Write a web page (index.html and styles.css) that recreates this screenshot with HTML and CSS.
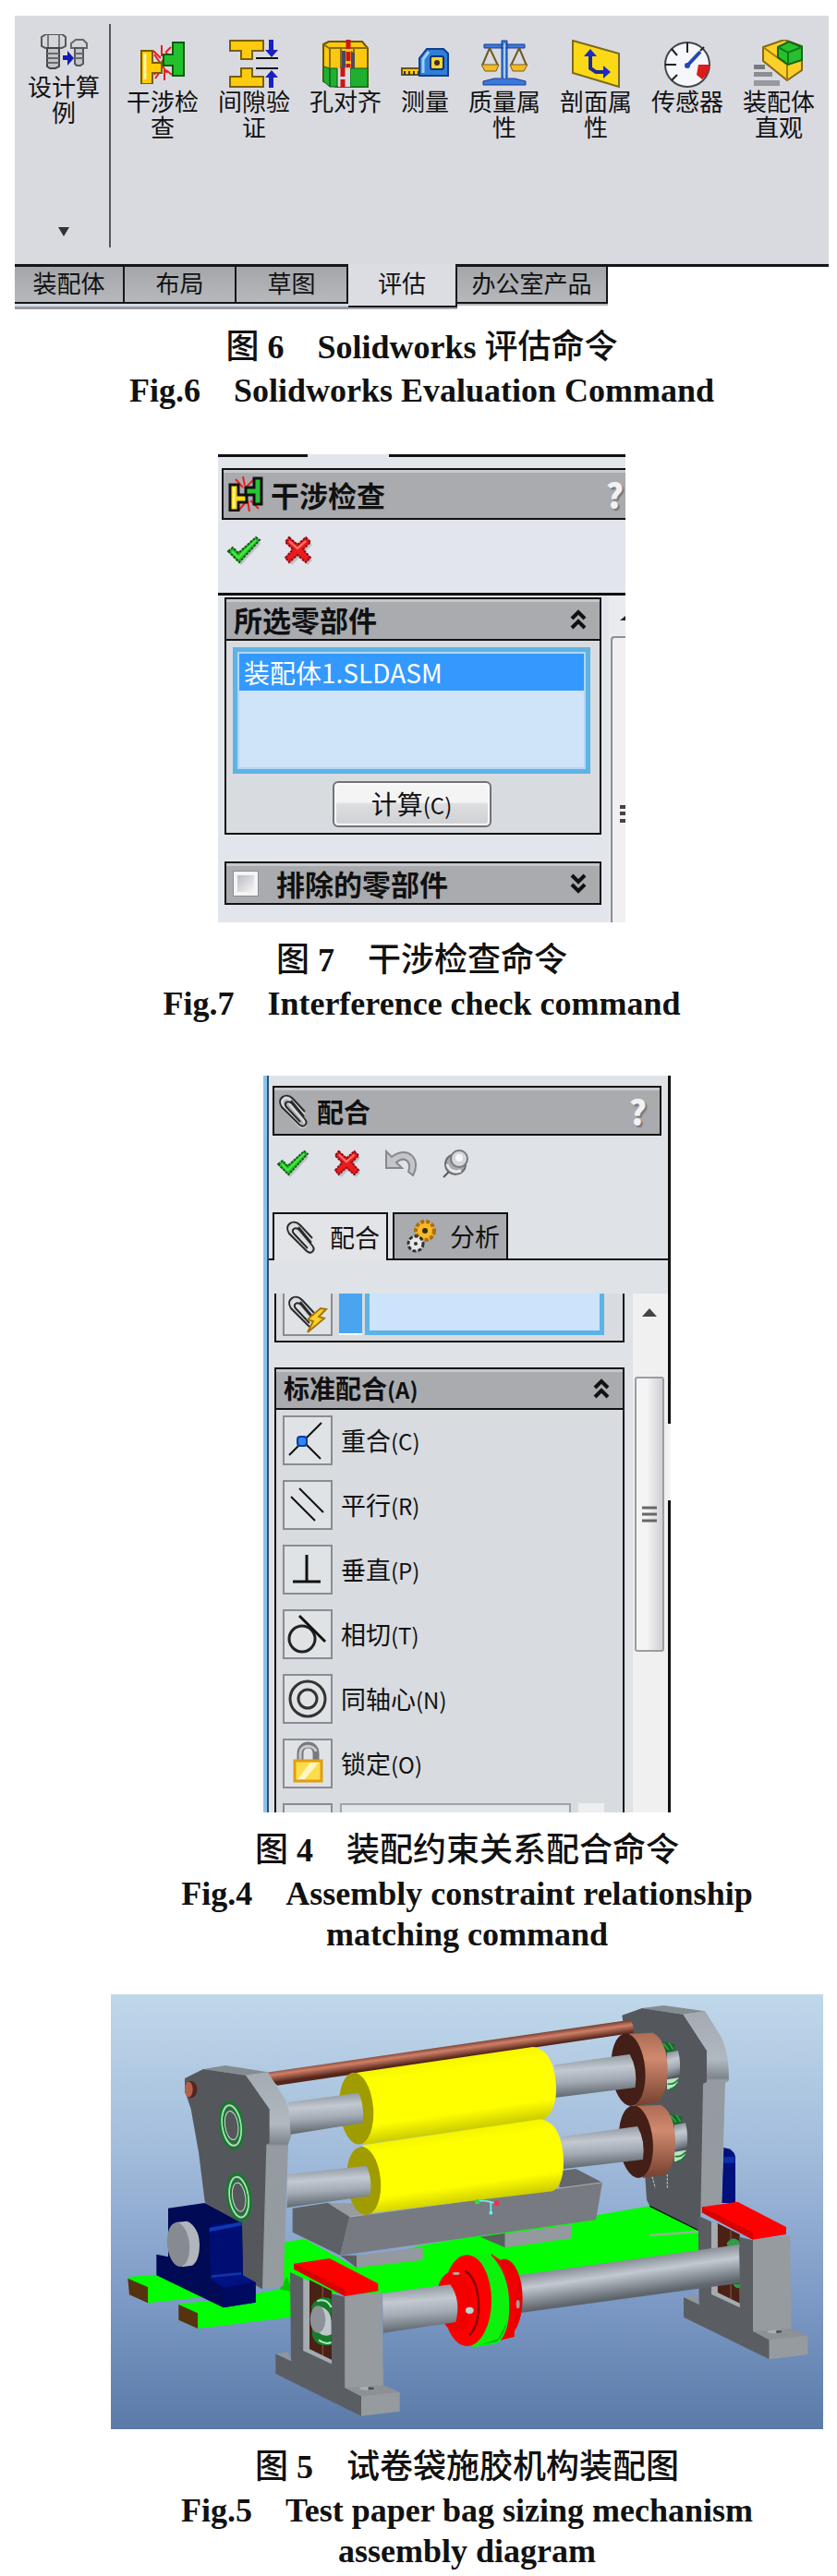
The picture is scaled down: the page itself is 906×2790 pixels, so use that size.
FILE: index.html
```html
<!DOCTYPE html>
<html lang="zh-CN">

<head>
    <meta charset="UTF-8" />
    <meta name="viewport" content="width=device-width, initial-scale=1" />
    <title>Solidworks 装配与评估</title>
    <link rel="stylesheet" href="styles.css">
</head>

<body>
    <!-- símbolos reutilizados nos painéis -->
    <svg class="sprite" aria-hidden="true">
        <symbol id="i-check" viewBox="0 0 38 32">
            <path d="M3 18l6-4 5 6L32 2l4 5-21 23z" fill="#9aa0a4" transform="translate(1 2)" opacity=".5" />
            <path d="M2 17l5-4 6 6L32 2l4 3-22 24z" fill="#22c822" stroke="#0b5a12" stroke-width="2" stroke-dasharray="3 1" />
            <path d="M6 17l7 7L32 5" fill="none" stroke="#4de64a" stroke-width="2" />
        </symbol>
        <symbol id="i-cross" viewBox="0 0 32 32">
            <path d="M7 3l9 8 9-8 4 5-8 8 8 9-5 5-8-9-9 9-5-5 9-9-8-8z" fill="#9aa0a4" transform="translate(2 2)" opacity=".5" />
            <path d="M6 2l9 8 9-8 5 5-8 8 8 9-5 5-9-8-9 8-4-5 8-9-8-8z" fill="#ec1c1c" stroke="#8e0b10" stroke-width="2" stroke-dasharray="3 1" />
            <path d="M6 6l9 8 9-8" fill="none" stroke="#ff7d76" stroke-width="2" />
        </symbol>
        <symbol id="i-up" viewBox="0 0 18 24">
            <path d="M2 11l7-7 7 7M2 21l7-7 7 7" fill="none" stroke="#111" stroke-width="4" />
        </symbol>
        <symbol id="i-down" viewBox="0 0 18 24">
            <path d="M2 3l7 7 7-7M2 13l7 7 7-7" fill="none" stroke="#111" stroke-width="4" />
        </symbol>
        <symbol id="i-clip" viewBox="0 0 34 38">
            <path d="M17 27L6 15c-6-7 2-14 8-8l14 17M10 8l18 21c4 6-1 9-5 5L7 17" fill="none" stroke="#d8dade" stroke-width="4" />
            <path d="M29 20L16 6C8-2-2 6 4 15l19 19c5 4 10-1 6-6L15 11c-5-4-9 0-6 4l15 16M28 25L14 8" fill="none" stroke="#2b2b2b" stroke-width="2" />
        </symbol>
        <symbol id="i-clash" viewBox="0 0 50 46">
            <path d="M16 14l14 20M30 12L16 36M24 4v12M15 10l8 8M34 6l-6 6M27 42V30M17 40l5-7M35 36l-6-5" stroke="#e62020" stroke-width="2" />
            <path d="M2 10h12v13h10v11H14v12H2z" fill="#fc0" stroke="#7a5c00" stroke-width="2" />
            <path d="M48 1H36v13H26v12h10v11h12z" fill="#22c02c" stroke="#11590f" stroke-width="2" />
            <path d="M6 13v28" stroke="#fff2a0" stroke-width="3" />
        </symbol>
        <symbol id="i-clash-small" viewBox="0 0 38 38">
            <path d="M16 0l2 10M8 3l8 9M28 3l-9 9M23 38l-2-12M12 36l7-8M33 35l-9-9" stroke="#f01c1c" stroke-width="2" />
            <path d="M2 9h9v11h9v8h-9v9H2z" fill="#fcdc10" stroke="#111" stroke-width="3" />
            <path d="M36 2h-8v10h-9v8h9v10h8z" fill="#28c434" stroke="#111" stroke-width="3" />
            <path d="M6 12v22" stroke="#fff6b0" stroke-width="2" />
        </symbol>
    </svg>

    <main class="page">
        <section class="group group-top">
            <figure>
                <div class="ribbon">
                    <div class="ribbon-tools">
                        <button class="tool tool-study" type="button">
                            <svg width="52" height="38" viewBox="0 0 52 38">
                                <path d="M2 3l5-3h17l4 3v10l-4 2H6l-4-2z" fill="#d4d6da" stroke="#55575c" stroke-width="2" />
                                <path d="M9 1v13M21 1v13" stroke="#77797e" stroke-width="2" />
                                <path d="M8 15h13v20l-4 2h-6l-3-2z" fill="#c2c4c8" stroke="#44464a" stroke-width="2" />
                                <path d="M8 21h13M8 26h13M8 31h13" stroke="#66686c" stroke-width="2" />
                                <path d="M34 10l5-4h8l4 4v5H34z" fill="#d4d6da" stroke="#66686c" stroke-width="2" />
                                <path d="M38 15h9v17l-3 2h-4l-2-2z" fill="#c2c4c8" stroke="#55575c" stroke-width="2" />
                                <path d="M38 21h9M38 26h9" stroke="#66686c" stroke-width="2" />
                                <path d="M25 23h5v-5l7 8-7 8v-6h-5z" fill="#1419b4" />
                            </svg>
                            <span>设计算例</span>
                            <svg class="tool-more" width="12" height="10" viewBox="0 0 12 10">
                                <path d="M0 0h12L6 10z" fill="#333" />
                            </svg>
                        </button>
                        <button class="tool" type="button">
                            <svg width="50" height="50" viewBox="0 -2 50 50"><use href="#i-clash" width="50" height="46" /></svg>
                            <span>干涉检查</span>
                        </button>
                        <button class="tool" type="button">
                            <svg width="54" height="52" viewBox="0 0 54 52">
                                <path d="M1 1h36v11H25v9H13v-9H1zM1 51h36V40H25v-9H13v9H1z" fill="#fccb10" stroke="#7a6000" stroke-width="2" />
                                <path d="M29 20h24M29 31h24" stroke="#111" stroke-width="2" />
                                <path d="M43 0h5v11h5l-7 8-7-8h4zM43 52h5V41h5l-7-8-7 8h4z" fill="#1a1fc0" />
                            </svg>
                            <span>间隙验证</span>
                        </button>
                        <button class="tool" type="button">
                            <svg width="50" height="52" viewBox="0 0 50 52">
                                <path d="M1 5l6-3h36l6 7v42H15L1 45z" fill="#fcc810" stroke="#6d5600" stroke-width="2" />
                                <path d="M1 29l7 2v20l-7-6zM8 31h8v20H8zM30 31h19v20H30z" fill="#20b030" stroke="#0e5a16" />
                                <path d="M1 5l6 4h42M8 9v22M20 9v40M34 9v20" stroke="#8a6d00" stroke-width="2" fill="none" />
                                <path d="M17 31h13v20H17z" fill="#d9dae0" />
                                <path d="M21 12h4v18h-4zM31 12l4 3v16h-4z" fill="#444b66" />
                                <path d="M28 0v30M22 30v22" stroke="#d01414" stroke-width="5" stroke-dasharray="10 3" />
                            </svg>
                            <span>孔对齐</span>
                        </button>
                        <button class="tool tool-narrow" type="button">
                            <svg width="52" height="50" viewBox="0 0 52 50">
                                <path d="M1 31h28v7H1z" fill="#fcc810" stroke="#6d5600" stroke-width="2" />
                                <path d="M4 38v-4M9 38v-4M14 38v-4M19 38v-4" stroke="#333" stroke-width="2" />
                                <path d="M20 39V20L28 10h18l5 5v24z" fill="#2f7fd8" stroke="#123f8c" stroke-width="2" />
                                <path d="M24 36V21l6-8" fill="none" stroke="#9fd0ff" stroke-width="3" />
                                <rect x="32" y="18" width="14" height="14" rx="2" fill="#fcd430" stroke="#0e3470" stroke-width="2" />
                                <circle cx="39" cy="25" r="3" fill="#41301a" />
                            </svg>
                            <span>测量</span>
                        </button>
                        <button class="tool" type="button">
                            <svg width="50" height="50" viewBox="0 0 50 50">
                                <path d="M3 5h44v4H3zM22 1h6v40h-6zM14 42h22l12 3v4H2v-4z" fill="#3b78dc" stroke="#1a3d94" />
                                <path d="M25 4v38" stroke="#a5ccff" stroke-width="2" />
                                <path d="M9 9L1 28M9 9l9 19M41 9l-9 19M41 9l8 19" stroke="#6e5a20" stroke-width="2" />
                                <path d="M0 27h19l-3 7H4zM31 27h19l-4 7H34z" fill="#f2bb28" stroke="#7a5a10" />
                            </svg>
                            <span>质量属性</span>
                        </button>
                        <button class="tool" type="button">
                            <svg width="52" height="52" viewBox="0 0 52 52">
                                <path d="M1 1l50 14v36L1 36z" fill="#fbd916" stroke="#7d6a20" stroke-width="2" />
                                <path d="M20 17v14l6 4h8" fill="none" stroke="#1d2a9c" stroke-width="4" />
                                <path d="M20 10l7 8H13zM42 35l-8 7V28z" fill="#1d2acb" />
                            </svg>
                            <span>剖面属性</span>
                        </button>
                        <button class="tool" type="button">
                            <svg width="52" height="52" viewBox="0 0 52 52">
                                <circle cx="26" cy="27" r="24" fill="#f6f7fa" stroke="#44464c" stroke-width="2" />
                                <path d="M38 27h12c0 7-3 12-8 16l-6-5z" fill="#da1c1c" />
                                <path d="M26 3v11M2 27h12M9 10l6 7M9 44l6-6M40 12l4-4" stroke="#222" stroke-width="2" />
                                <path d="M26 28L40 13" stroke="#2546b8" stroke-width="4" />
                                <circle cx="26" cy="28" r="3" fill="#2546b8" />
                            </svg>
                            <span>传感器</span>
                        </button>
                        <button class="tool" type="button">
                            <svg width="54" height="52" viewBox="0 0 54 52">
                                <path d="M10 8L33 0l19 7v26l-16 11-26-21z" fill="#fbd028" stroke="#86681a" stroke-width="2" />
                                <path d="M10 8l26 19v17M36 27l16-7" stroke="#a57c10" stroke-width="2" fill="none" />
                                <path d="M26 8l12-6 14 6v14l-15 5-11-8z" fill="#27bf2d" stroke="#0f6716" stroke-width="2" />
                                <path d="M26 8l11 6 15-6M37 14v12" stroke="#0f7d1a" stroke-width="2" fill="none" />
                                <path d="M0 27h12v5H0z" fill="#77797e" />
                                <path d="M0 35h20v5H0z" fill="#8b8d92" />
                                <path d="M0 44h28v6H0z" fill="#97999e" />
                            </svg>
                            <span>装配体直观</span>
                        </button>
                    </div>
                    <div class="ribbon-tabs" role="tablist">
                        <button class="rtab rtab-first" role="tab" type="button">装配体</button>
                        <button class="rtab" role="tab" type="button">布局</button>
                        <button class="rtab" role="tab" type="button">草图</button>
                        <button class="rtab rtab-active" role="tab" aria-selected="true" type="button">评估</button>
                        <button class="rtab rtab-wide" role="tab" type="button">办公室产品</button>
                        <span class="ribbon-rest"></span>
                    </div>
                </div>
                <figcaption>
                    <p class="zh">图 <b>6</b>　<b>Solidworks</b> 评估命令</p>
                    <p>Fig.6　Solidworks Evaluation Command</p>
                </figcaption>
            </figure>

            <figure>
                <div class="panel check-panel">
                    <div class="panel-edge"></div>
                    <div class="title-bar title-cut">
                        <svg width="38" height="38"><use href="#i-clash-small" /></svg>
                        <span>干涉检查</span>
                        <b class="help">?</b>
                    </div>
                    <div class="actions">
                        <button type="button" aria-label="确定"><svg width="38" height="32"><use href="#i-check" /></svg></button>
                        <button type="button" aria-label="取消"><svg width="32" height="32"><use href="#i-cross" /></svg></button>
                    </div>
                    <div class="check-body">
                        <div class="check-main">
                            <section class="box">
                                <h2 class="box-head">
                                    <label for="parts">所选零部件</label>
                                    <svg width="18" height="24"><use href="#i-up" /></svg>
                                </h2>
                                <div class="box-content">
                                    <select class="parts" id="parts" size="4">
                                        <option selected>装配体1.SLDASM</option>
                                    </select>
                                    <button class="calc" type="button">计算<small>(C)</small></button>
                                </div>
                            </section>
                            <section class="box">
                                <h2 class="box-head">
                                    <input class="tick" type="checkbox" id="exclude">
                                    <label class="grow" for="exclude">排除的零部件</label>
                                    <svg width="18" height="24"><use href="#i-down" /></svg>
                                </h2>
                            </section>
                        </div>
                        <div class="check-scroll">
                            <svg width="6" height="5"><path d="M0 5l6-5v5z" fill="#222" /></svg>
                            <div class="check-thumb">
                                <svg width="6" height="20"><path d="M0 2h6M0 9h6M0 17h6" stroke="#444" stroke-width="4" /></svg>
                            </div>
                        </div>
                    </div>
                </div>
                <figcaption>
                    <p class="zh">图 <b>7</b>　干涉检查命令</p>
                    <p>Fig.7　Interference check command</p>
                </figcaption>
            </figure>
        </section>

        <section class="group group-bottom">
            <figure>
                <div class="panel mate-panel">
                    <div class="mate-frame">
                        <div class="title-bar mate-title">
                            <svg width="34" height="38"><use href="#i-clip" /></svg>
                            <span>配合</span>
                            <b class="help">?</b>
                        </div>
                        <div class="actions mate-actions">
                            <button type="button" aria-label="确定"><svg width="36" height="30"><use href="#i-check" /></svg></button>
                            <button type="button" aria-label="取消"><svg width="30" height="30"><use href="#i-cross" /></svg></button>
                            <button type="button" aria-label="撤消">
                                <svg width="36" height="30" viewBox="0 0 36 30">
                                    <path d="M1 2v18h17l-6-6c8-7 17-2 13 10l5 4C40 10 24-5 7 8z" fill="#c3c5ca" stroke="#85888e" stroke-width="2" />
                                </svg>
                            </button>
                            <button type="button" aria-label="保持可见">
                                <svg width="28" height="32" viewBox="0 0 28 32">
                                    <path d="M1 30l9-9" stroke="#55575c" stroke-width="2" />
                                    <circle cx="14" cy="16" r="11" fill="#a9abb0" stroke="#6c6e73" stroke-width="2" />
                                    <path d="M5 16c2 8 10 9 15 7" stroke="#e8e9ec" stroke-width="3" fill="none" />
                                    <circle cx="18" cy="10" r="9" fill="#d5d7da" stroke="#787a80" stroke-width="2" />
                                    <circle cx="18" cy="9" r="4" fill="#f7f7f9" />
                                </svg>
                            </button>
                        </div>
                        <div class="mate-tabs" role="tablist">
                            <button class="mtab mtab-active" role="tab" aria-selected="true" type="button">
                                <svg width="34" height="38"><use href="#i-clip" /></svg>配合
                            </button>
                            <button class="mtab" role="tab" type="button">
                                <svg width="34" height="38" viewBox="0 0 34 38">
                                    <circle cx="21" cy="13" r="10" fill="#f7b928" stroke="#b06d06" stroke-width="4" stroke-dasharray="4 2" />
                                    <circle cx="21" cy="13" r="3" fill="#3a2a10" />
                                    <circle cx="11" cy="27" r="8" fill="#e6e8ea" stroke="#2f3134" stroke-width="3" stroke-dasharray="4 2" />
                                    <circle cx="11" cy="27" r="2" fill="#333" />
                                </svg>分析
                            </button>
                        </div>
                        <div class="mate-body">
                            <div class="mate-main">
                                <section class="box picks">
                                    <button class="square square-cut" type="button" aria-label="多配合模式">
                                        <svg width="44" height="42" viewBox="0 0 44 42">
                                            <use href="#i-clip" width="34" height="38" />
                                            <path d="M36 15L22 27l6 2-6 12 18-15-6-2 8-8z" fill="#fcd22a" stroke="#a87608" stroke-width="2" />
                                        </svg>
                                    </button>
                                    <span class="pick-mark"></span>
                                    <span class="pick-list"></span>
                                </section>
                                <section class="box mates">
                                    <h2 class="box-head">
                                        <span>标准配合<small>(A)</small></span>
                                        <svg width="18" height="24"><use href="#i-up" /></svg>
                                    </h2>
                                    <div class="mate-list">
                                        <button class="mate" type="button">
                                            <span class="square"><svg width="50" height="50" viewBox="0 0 50 50">
                                                <path d="M5 41L40 6M20 26l19 19" stroke="#111" stroke-width="2" />
                                                <rect x="14" y="21" width="10" height="10" rx="3" fill="#2f86f4" stroke="#0b3c9c" stroke-width="2" />
                                            </svg></span>
                                            <span>重合<small>(C)</small></span>
                                        </button>
                                        <button class="mate" type="button">
                                            <span class="square"><svg width="50" height="50" viewBox="0 0 50 50">
                                                <path d="M16 7l26 26M7 16l26 26" stroke="#111" stroke-width="2" />
                                            </svg></span>
                                            <span>平行<small>(R)</small></span>
                                        </button>
                                        <button class="mate" type="button">
                                            <span class="square"><svg width="50" height="50" viewBox="0 0 50 50">
                                                <path d="M24 9v29M9 38h30" stroke="#111" stroke-width="3" />
                                            </svg></span>
                                            <span>垂直<small>(P)</small></span>
                                        </button>
                                        <button class="mate" type="button">
                                            <span class="square"><svg width="50" height="50" viewBox="0 0 50 50">
                                                <circle cx="19" cy="30" r="14" fill="none" stroke="#222" stroke-width="3" />
                                                <path d="M16 5l28 28" stroke="#111" stroke-width="3" />
                                            </svg></span>
                                            <span>相切<small>(T)</small></span>
                                        </button>
                                        <button class="mate" type="button">
                                            <span class="square"><svg width="50" height="50" viewBox="0 0 50 50">
                                                <circle cx="25" cy="25" r="19" fill="none" stroke="#333" stroke-width="3" />
                                                <circle cx="25" cy="25" r="10" fill="none" stroke="#333" stroke-width="3" />
                                            </svg></span>
                                            <span>同轴心<small>(N)</small></span>
                                        </button>
                                        <button class="mate" type="button">
                                            <span class="square"><svg width="50" height="50" viewBox="0 0 50 50">
                                                <path d="M17 23v-9c0-12 17-12 17 0v9" fill="none" stroke="#77797e" stroke-width="7" />
                                                <path d="M17 21v-7c0-10 15-10 17-2" fill="none" stroke="#c8cacd" stroke-width="3" />
                                                <rect x="11" y="22" width="29" height="22" fill="#fbdc4c" stroke="#e09e10" stroke-width="3" />
                                                <path d="M14 42l14-18h9L22 42z" fill="#fff6c4" />
                                            </svg></span>
                                            <span>锁定<small>(O)</small></span>
                                        </button>
                                        <div class="mate-next">
                                            <span class="square"></span>
                                            <input class="distance" type="text" aria-label="距离">
                                            <span class="spin"></span>
                                        </div>
                                    </div>
                                </section>
                            </div>
                            <div class="mate-scroll">
                                <svg width="16" height="9"><path d="M0 9l8-9 8 9z" fill="#444" /></svg>
                                <div class="mate-thumb">
                                    <svg width="16" height="18"><path d="M0 2h16M0 9h16M0 16h16" stroke="#666" stroke-width="3" /></svg>
                                </div>
                            </div>
                        </div>
                    </div>
                    <div class="mate-side"><i></i><i></i></div>
                </div>
                <figcaption>
                    <p class="zh">图 <b>4</b>　装配约束关系配合命令</p>
                    <p>Fig.4　Assembly constraint relationship<br>matching command</p>
                </figcaption>
            </figure>

            <figure>
                <svg class="model" viewBox="30 27 2313 1413" role="img" aria-label="试卷袋施胶机构装配图">
                    <defs>
                        <linearGradient id="sky" x1="0" y1="0" x2="0" y2="1">
                            <stop offset="0" stop-color="#c0d8ea" />
                            <stop offset=".35" stop-color="#a3bddc" />
                            <stop offset=".7" stop-color="#7d9ac6" />
                            <stop offset="1" stop-color="#5b7aa7" />
                        </linearGradient>
                        <linearGradient id="steel" x1="0" y1="0" x2=".13" y2="1">
                            <stop offset="0" stop-color="#7f868d" />
                            <stop offset=".38" stop-color="#c3c9d1" />
                            <stop offset=".65" stop-color="#a3abb4" />
                            <stop offset="1" stop-color="#5e656d" />
                        </linearGradient>
                        <linearGradient id="axle" gradientUnits="userSpaceOnUse" x1="1600" y1="900" x2="1617" y2="1020">
                            <stop offset="0" stop-color="#7f868d" />
                            <stop offset=".4" stop-color="#c3c9d1" />
                            <stop offset="1" stop-color="#5e656d" />
                        </linearGradient>
                        <linearGradient id="rod" gradientUnits="userSpaceOnUse" x1="1100" y1="195" x2="1106" y2="238">
                            <stop offset="0" stop-color="#6e3628" />
                            <stop offset=".4" stop-color="#cf8068" />
                            <stop offset="1" stop-color="#54251a" />
                        </linearGradient>
                        <linearGradient id="roll" gradientUnits="userSpaceOnUse" x1="1100" y1="240" x2="1134" y2="474">
                            <stop offset="0" stop-color="#f4f400" />
                            <stop offset=".15" stop-color="#ff0" />
                            <stop offset=".75" stop-color="#ff0" />
                            <stop offset="1" stop-color="#cccc00" />
                        </linearGradient>
                        <linearGradient id="disc" x1="0" y1="0" x2="0" y2="1">
                            <stop offset="0" stop-color="#ad6c55" />
                            <stop offset=".35" stop-color="#d08a6e" />
                            <stop offset="1" stop-color="#75402f" />
                        </linearGradient>
                        <linearGradient id="cheek" x1="0" y1="0" x2="0" y2="1">
                            <stop offset="0" stop-color="#a4abb1" />
                            <stop offset=".24" stop-color="#b0b8c0" />
                            <stop offset=".33" stop-color="#7d848a" />
                            <stop offset=".34" stop-color="#949ba1" />
                            <stop offset="1" stop-color="#959b9f" />
                        </linearGradient>
                        <g id="cheek-plate">
                            <path d="M468 290l72-10 60 95c10 30 18 70 18 105l-12 33-16 462-68 10z" fill="url(#cheek)" />
                            <path d="M330 270l72-12 138 22-72 10z" fill="#858c91" />
                            <path d="M270 300l60-30 138 20 77 110v110l-10 5-13 470-62-35-125-250-20-160-25-140-20-60z" fill="#54585d" />
                        </g>
                        <g id="ring" fill="none">
                            <ellipse rx="36" ry="76" stroke="#167a2a" stroke-width="8" />
                            <ellipse rx="30" ry="66" stroke="#9fe5b2" stroke-width="6" />
                            <ellipse rx="25" ry="55" stroke="#187b2c" stroke-width="6" />
                            <ellipse rx="21" ry="47" stroke="#c9d8ce" stroke-width="3" />
                        </g>
                        <g id="stand">
                            <path d="M675 955l72 36v224l-72-35z" fill="#4b2015" />
                            <path d="M718 975v230" stroke="#8e5a48" stroke-width="3" />
                            <path d="M612 930l43 20v235l92 43v-228l43 10v295l53 28v64L565 1260v-65l50 24z" fill="#5a5e63" />
                            <path d="M655 950l20 9v221l72 35v13l-92-43z" fill="#a5abaf" />
                            <path d="M565 1195l40-6 12 30z" fill="#90969a" />
                            <path d="M790 1008l120-13 5 305 53 20v62l-125 15v-64l-53-28z" fill="#959b9f" />
                            <path d="M790 1305l125-8 53 23-125 13z" fill="#8b9195" />
                            <ellipse cx="862" cy="1307" rx="26" ry="6" fill="#a8aeb2" />
                            <path d="M866 1303q20 0 20 4-4 6-20 5z" fill="#4b4f53" />
                            <path d="M625 902l115-17 158 82v24l-108 17-165-88z" fill="#f00" />
                            <path d="M625 902l165 84v22l-165-88z" fill="#d60000" />
                        </g>
                        <g id="wheel">
                            <path d="M545 156l75-4c30 15 48 60 48 120 0 50-12 85-30 105l-75 13z" fill="url(#disc)" />
                            <ellipse cx="540" cy="272" rx="55" ry="118" fill="#431f18" transform="rotate(-5 540 272)" />
                        </g>
                    </defs>
                    <rect x="30" y="27" width="2313" height="1413" fill="url(#sky)" />

                    <!-- base verde -->
                    <path d="M595 832l65-10 165 93 200-70 755-130 160 80v66l-590 79-450 60H580z" fill="#0f0" />
                    <path d="M85 945l95-6 150 72-180 19z" fill="#0f0" />
                    <path d="M85 950l65 28v52l-60-27z" fill="#55330f" />
                    <path d="M250 1033l150-15 180-33 60 5v83l-328 40z" fill="#0f0" />
                    <path d="M578 985l24-40 20 50z" fill="#07c507" />
                    <path d="M250 1035l62 28v50l-62-28z" fill="#55330f" />

                    <!-- lateral direita -->
                    <path d="M2020 525q36 5 38 30v150h-44z" fill="#00107c" />
                    <path d="M2020 555h36v20h-36z" fill="#0b2fae" />
                    <g transform="translate(1170 0)">
                        <path d="M718 92l72-10 50 80c20 40 27 80 27 145l-12 8-12 390-70 37z" fill="url(#cheek)" />
                        <path d="M585 72l70-9 135 19-72 10z" fill="#858c91" />
                        <path d="M520 95l65-23 133 20 77 118v102l-12 6-8 425-5 52-160-80-10-20-5-75z" fill="#54585d" />
                        <path d="M610 715l160 80" stroke="#111" stroke-width="4" />
                        <path d="M610 806l160-12v8l-160 12z" fill="#8fb78f" />
                        <path d="M618 620l10 36M667 612v44" stroke="#c9ced2" stroke-width="3" stroke-dasharray="8 4" />
                    </g>
                    <g id="journal">
                        <path d="M1818 180l44 10-4 22-40 8z" fill="#146a26" />
                        <path d="M1824 186l18 22M1842 184l14 22" stroke="#2fa546" stroke-width="5" />
                        <path d="M1836 216l36-6q10 40 4 78l-40 12z" fill="url(#steel)" />
                        <path d="M1836 304l38-6q-4 34-38 38z" fill="#b8e6c4" />
                        <path d="M1838 318q20 4 34-14M1846 334q12 0 22-14" stroke="#187b2c" stroke-width="5" fill="none" />
                    </g>
                    <use href="#journal" x="24" y="235" />

                    <!-- haste de cobre -->
                    <path d="M530 282l1185-172q14 12 12 42L570 323z" fill="url(#rod)" />

                    <!-- cuba -->
                    <path d="M620 722l115-18 100 40-30 6-30 125-155-75z" fill="#5d6166" />
                    <path d="M735 706l90 0 20 40-40 4z" fill="#969ca1" />
                    <path d="M1490 600l50-6 86 44-140 20z" fill="#64686d" />
                    <path d="M775 875h53v40z" fill="#5a5e63" />
                    <path d="M828 875l215-27v42l-215 25z" fill="#93999e" />
                    <path d="M1230 815l80-12v47z" fill="#5a5e63" />
                    <path d="M1310 805l215-30v45l-215 30z" fill="#93999e" />
                    <path d="M805 750l821-112-21 122-830 115z" fill="#777b81" />
                    <path d="M805 750l821-112" stroke="#a9afb4" stroke-width="3" />

                    <!-- eixos e rolos -->
                    <use href="#wheel" transform="translate(1170 0)" />
                    <use href="#wheel" transform="translate(1195 234)" />
                    <path d="M1470 256l245-34q26 46 18 108l-263 33z" fill="url(#steel)" />
                    <path d="M1495 490l245-34q26 46 18 108l-263 31z" fill="url(#steel)" />

                    <use href="#cheek-plate" />
                    <path d="M825 282l575-84c50 6 75 60 76 140 0 50-20 90-46 96L850 515z" fill="url(#roll)" />
                    <ellipse cx="827" cy="398" rx="55" ry="117" fill="#a09c00" transform="rotate(-5 827 398)" />
                    <g transform="translate(24 235)">
                        <path d="M825 282l575-84c50 6 75 60 76 140 0 50-14 85-36 94L830 505z" fill="url(#roll)" />
                        <ellipse cx="827" cy="398" rx="55" ry="111" fill="#a09c00" transform="rotate(-5 827 398)" />
                    </g>
                    <path d="M606 378l228-31q20 40 14 98l-234 37z" fill="url(#steel)" />
                    <path d="M604 612l256-28q20 40 12 98l-270 38z" fill="url(#steel)" />

                    <ellipse cx="290" cy="336" rx="20" ry="28" fill="#54251a" />
                    <ellipse cx="283" cy="336" rx="13" ry="25" fill="#b0614c" />
                    <use href="#ring" transform="translate(422 453) rotate(-8)" />
                    <use href="#ring" transform="translate(446 686) rotate(-8)" />

                    <!-- mancal azul -->
                    <path d="M216 722l118-17 122 66 3 172 41 20v65l-105 17-217-105v-68l38 8z" fill="#000a55" />
                    <path d="M350 790q5-15 25-18l80-4 4 175-104 12z" fill="#000e74" />
                    <path d="M350 792l105-20" stroke="#0d38b8" stroke-width="12" />
                    <path d="M352 950l107-10 41 22-105 18z" fill="#001183" />
                    <path d="M395 980l105-16v64l-105 17z" fill="#000a60" />
                    <path d="M356 944l98-10" stroke="#0f35a8" stroke-width="8" />
                    <path d="M240 768l38-4q38 20 40 74 0 56-24 70l-34 5z" fill="#b0b6bc" />
                    <ellipse cx="249" cy="840" rx="36" ry="72" fill="#858b90" transform="rotate(-6 249 840)" />

                    <!-- suportes, eixo e acoplamento -->
                    <use href="#stand" transform="translate(1325 -184)" />
                    <use href="#stand" />
                    <g>
                        <path d="M682 1040q20-40 64-24v150q-50 10-62-30z" fill="#187b2c" />
                        <path d="M700 1024q30-12 46 20M705 1150q20 16 41 8" stroke="#a6ecb8" stroke-width="6" fill="none" />
                        <path d="M705 1042q42 4 41 60v30q-20 10-40-5z" fill="#c0c6cb" />
                        <ellipse cx="702" cy="1083" rx="25" ry="44" fill="#8c9297" />
                    </g>
                    <path d="M2030 835q20-26 40-6l4 20-40 4zM2050 968h24v12q-14 6-24-12z" fill="#2f9c48" />
                    <path d="M1345 941l725-101 3 125-718 98z" fill="url(#axle)" />

                    <ellipse cx="1308" cy="1015" rx="59" ry="128" fill="#e80000" />
                    <path d="M1265 870l30 20 55 50-10 200-50 12z" fill="#f00000" />
                    <path d="M1190 876l70-6q64 60 64 170 0 90-40 122l-80 12z" fill="#0df20d" />
                    <path d="M1230 1166l54-10q24-20 34-70l-30 60z" fill="#00bf12" />
                    <ellipse cx="1187" cy="1022" rx="79" ry="148" fill="#f00" />
                    <path d="M1180 925q46 30 44 130-2 50-30 80" stroke="#8b0000" stroke-width="8" fill="none" />
                    <ellipse cx="1148" cy="1025" rx="60" ry="98" fill="#f20000" transform="rotate(-6 1148 1025)" />
                    <path d="M912 1000l220-30q36 50 18 122l-235 35z" fill="url(#steel)" />
                    <ellipse cx="1195" cy="1054" rx="13" ry="11" fill="#b9d4d2" />
                    <ellipse cx="1151" cy="934" rx="12" ry="5" fill="#b9a9a4" />
                    <ellipse cx="1352" cy="1034" rx="6" ry="14" fill="#a99" />

                    <!-- triedro de coordenadas -->
                    <path d="M1222 698h24l18 4v34M1264 702l18 4" stroke="#6df0f0" stroke-width="5" fill="none" />
                    <circle cx="1220" cy="701" r="8" fill="#2ddc45" />
                    <circle cx="1283" cy="706" r="9" fill="#f2304a" />
                    <circle cx="1264" cy="737" r="6" fill="#5ff2f2" />
                </svg>
                <figcaption>
                    <p class="zh">图 <b>5</b>　试卷袋施胶机构装配图</p>
                    <p>Fig.5　Test paper bag sizing mechanism<br>assembly diagram</p>
                </figcaption>
            </figure>
        </section>
    </main>
</body>

</html>
```
FILE: styles.css
```css
* {
    box-sizing: border-box;
}

body {
    margin: 0;
    background: #fff;
    color: #111;
    font-family: "Noto Sans CJK SC", "Noto Sans", sans-serif;
}

button,
input,
select {
    font: inherit;
    color: inherit;
}

button {
    padding: 0;
    border: 0;
    background: none;
}

svg {
    display: block;
    flex-shrink: 0;
}

figure,
h2,
p {
    margin: 0;
}

.sprite {
    position: absolute;
    width: 0;
    height: 0;
}

.page {
    padding: 17px 9px 7px 16px;
}

.group {
    display: flex;
    flex-direction: column;
    gap: 47px;
}

.group-bottom {
    gap: 43px;
    margin-top: 56px;
    padding: 0 6px 0 104px;
}

/* legendas */
figcaption {
    margin-top: 16px;
    font-family: "Liberation Serif", "Noto Sans CJK SC", serif;
    font-size: 36px;
    font-weight: 700;
    line-height: 44px;
    text-align: center;
}

figcaption .zh {
    font-weight: 500;
    line-height: 50px;
}

/* ─── Faixa de comandos ─────────────────────────── */
.ribbon {
    font-size: 26px;
    line-height: 28px;
}

.ribbon-tools {
    display: flex;
    gap: 21px;
    height: 269px;
    padding-top: 9px;
    background: #d9dae0;
}

.tool {
    display: flex;
    flex-direction: column;
    flex-shrink: 0;
    align-items: center;
    width: 78px;
    padding-top: 17px;
}

.tool span {
    width: 100%;
}

.tool-narrow {
    width: 52px;
}

.tool svg + span {
    margin-top: auto;
    height: 191px;
}

.tool-study {
    width: 104px;
    height: 242px;
    margin-right: -4px;
    padding: 11px 10px 12px 14px;
    border-right: 2px solid #55575c;
}

.tool.tool-study svg + span {
    margin-top: 4px;
    height: auto;
}

.tool .tool-more {
    margin-top: auto;
}

.ribbon-tabs {
    display: flex;
    align-items: flex-start;
    height: 49px;
}

.rtab {
    width: 121px;
    height: 43px;
    padding-bottom: 4px;
    border: 2px solid #15161a;
    border-left-width: 0;
    border-top-width: 3px;
    background: linear-gradient(#a4a6aa, #b6b8bc);
    box-shadow: 0 3px #d3dbe6, 0 6px #9699a2;
}

.rtab-first {
    width: 119px;
}

.rtab-active {
    width: 118px;
    height: 47px;
    padding-bottom: 5px;
    border-top: 0;
    border-bottom-width: 2px;
    background: #dcdde3;
    box-shadow: 0 2px #a9abb0;
}

.rtab-wide {
    width: 163px;
    box-shadow: 0 2px #b5b7bc;
}

.ribbon-rest {
    flex: 1;
    border-top: 3px solid #15161a;
}

/* ─── Painéis ───────────────────────────────────── */
.panel {
    max-width: 441px;
    margin: 0 auto;
    overflow: hidden;
}

.title-bar {
    display: flex;
    align-items: center;
    gap: 8px;
    height: 56px;
    border: 2px solid #111;
    background: #a9abaf;
    box-shadow: inset 0 3px #c6c8cc;
    font-size: 31px;
    font-weight: 700;
}

.help {
    margin-left: auto;
    color: #f2f2f2;
    font-size: 36px;
    line-height: 40px;
    text-shadow: 2px 2px 1px #77797e;
}

.actions {
    display: flex;
    align-items: flex-start;
}

.box {
    border: 2px solid #111;
    background: #d8dbdf;
}

.box-head {
    display: flex;
    align-items: center;
    justify-content: space-between;
    height: 43px;
    padding: 0 14px 0 8px;
    background: #a9abaf;
    box-shadow: inset 0 3px #c6c8cc;
    font-size: 31px;
    font-weight: 700;
    line-height: 40px;
}

small {
    font-size: 24px;
}

/* painel de interferência */
.check-panel {
    background: #e2e5eb;
}

.panel-edge {
    height: 3px;
    background: linear-gradient(90deg, #111 22%, #e2e5eb 22%, #e2e5eb 42%, #111 42%);
}

.title-cut {
    margin: 12px 0 0 4px;
    padding: 0 2px 0 5px;
    border-right: 0;
}

.check-panel .actions {
    gap: 24px;
    height: 79px;
    padding: 17px 0 0 9px;
}

.check-body {
    display: flex;
    height: 357px;
    border-top: 3px solid #111;
}

.check-main {
    flex: 1;
    display: flex;
    flex-direction: column;
    gap: 29px;
    padding: 2px 8px 0 7px;
}

.box-content {
    display: flex;
    flex-direction: column;
    align-items: center;
    gap: 8px;
    padding: 7px 10px 6px 7px;
    border-top: 2px solid #111;
}

.parts {
    width: 100%;
    height: 137px;
    padding: 0;
    overflow: hidden;
    border: 5px solid #5db3e6;
    border-radius: 0;
    outline: 0;
    background: #cfe4f8;
    box-shadow: inset 0 0 0 2px #b4d5f3;
    font-size: 28px;
}

.parts option {
    min-height: 31px;
    margin: 2px;
    padding: 0 5px;
    line-height: 31px;
}

.parts option:checked {
    background: #39f linear-gradient(#39f, #39f);
    color: #fff;
}

.calc {
    width: 172px;
    height: 50px;
    border: 2px solid #707276;
    border-radius: 6px;
    background: linear-gradient(#f4f4f5 45%, #dcdddf 50%, #d0d1d4);
    box-shadow: inset 0 0 0 2px #fafafa;
    font-size: 28px;
    line-height: 42px;
}

.tick {
    appearance: none;
    width: 26px;
    height: 26px;
    margin: 0 20px 0 0;
    border: 4px solid #f4f4f4;
    outline: 1px solid #8b8d92;
    background: linear-gradient(135deg, #b9bbc2, #f6f6f8);
}

.grow {
    flex: 1;
}

.check-scroll {
    width: 18px;
    background: #e9ebee;
    display: flex;
    flex-direction: column;
    align-items: flex-end;
    padding-top: 22px;
}

.check-thumb {
    flex: 1;
    display: flex;
    justify-content: flex-end;
    width: 16px;
    margin-top: 17px;
    padding-top: 181px;
    border: 2px solid #8d8f94;
    border-width: 2px 0 0 2px;
    border-radius: 4px 0 0 0;
    background: #f0f0f1;
}

/* painel de posicionamento */
.mate-panel {
    display: flex;
    border-left: 4px solid #89c4ec;
    background: #dfe2e6;
}

.mate-frame {
    flex: 1;
    border-left: 2px solid #31506c;
    padding-top: 11px;
}

.mate-title {
    height: 54px;
    margin: 0 7px 0 4px;
    padding: 0 14px 0 4px;
    font-size: 29px;
}

.mate-actions {
    gap: 26px;
    height: 83px;
    padding: 15px 0 0 8px;
}

.mate-tabs {
    display: flex;
    gap: 5px;
    height: 52px;
    padding-left: 4px;
    background: linear-gradient(#111, #111) bottom / 100% 2px no-repeat;
}

.mtab {
    display: flex;
    align-items: center;
    gap: 14px;
    width: 125px;
    padding-left: 12px;
    border: 2px solid #111;
    background: #a9abaf;
    font-size: 27px;
    line-height: 40px;
    white-space: nowrap;
}

.mtab-active {
    border-bottom: 0;
    background: #e2e4e8;
}

.mate-body {
    display: flex;
    margin-top: 36px;
}

.mate-main {
    flex: 1;
    padding: 0 9px 0 6px;
}

.picks {
    display: flex;
    align-items: flex-start;
    height: 53px;
    padding: 0 20px 0 7px;
    border-top: 0;
}

.square {
    display: flex;
    align-items: center;
    justify-content: center;
    flex-shrink: 0;
    width: 54px;
    height: 54px;
    border: 2px solid #8a8c92;
    background: #e0e3e6;
}

.square-cut {
    height: 46px;
    border-top: 0;
}

.pick-mark {
    width: 25px;
    height: 43px;
    margin: 0 3px 0 7px;
    background: #4aa5f0;
    box-shadow: 0 2px #fff;
}

.pick-list {
    flex: 1;
    height: 45px;
    border: 5px solid #5db3e6;
    border-top: 0;
    background: #cbe3fb;
}

.mates {
    margin-top: 27px;
    border-bottom: 0;
}

.mates .box-head {
    height: 42px;
    font-size: 28px;
}

.mate-list {
    display: flex;
    flex-direction: column;
    gap: 16px;
    padding: 6px 20px 0 7px;
    border-top: 2px solid #111;
}

.mate {
    display: flex;
    align-items: center;
    gap: 9px;
    font-size: 27px;
    line-height: 40px;
}

.mate-next {
    display: flex;
    gap: 8px;
    height: 10px;
    overflow: hidden;
}

.distance {
    flex: 1;
    min-width: 0;
    height: 40px;
    border: 2px solid #a0a3a8;
    background: #e2e6ea;
}

.spin {
    width: 28px;
    background: #eceef0;
}

.mate-scroll {
    display: flex;
    flex-direction: column;
    align-items: center;
    width: 38px;
    padding: 16px 3px 0 0;
    background: #f0f0f1;
}

.mate-thumb {
    display: flex;
    align-items: center;
    justify-content: center;
    width: 32px;
    height: 298px;
    margin-top: 65px;
    border: 2px solid #9b9da2;
    border-radius: 3px;
    background: linear-gradient(90deg, #f4f4f5 40%, #cfd0d4);
}

.mate-side {
    display: flex;
    flex-direction: column;
    gap: 83px;
    width: 3px;
    background: #f4f4f4;
}

.mate-side i {
    flex: 338;
    background: #111;
}

.mate-side i:first-child {
    flex: 377;
}

/* desenho do conjunto */
.model {
    width: 100%;
    height: auto;
}
```
